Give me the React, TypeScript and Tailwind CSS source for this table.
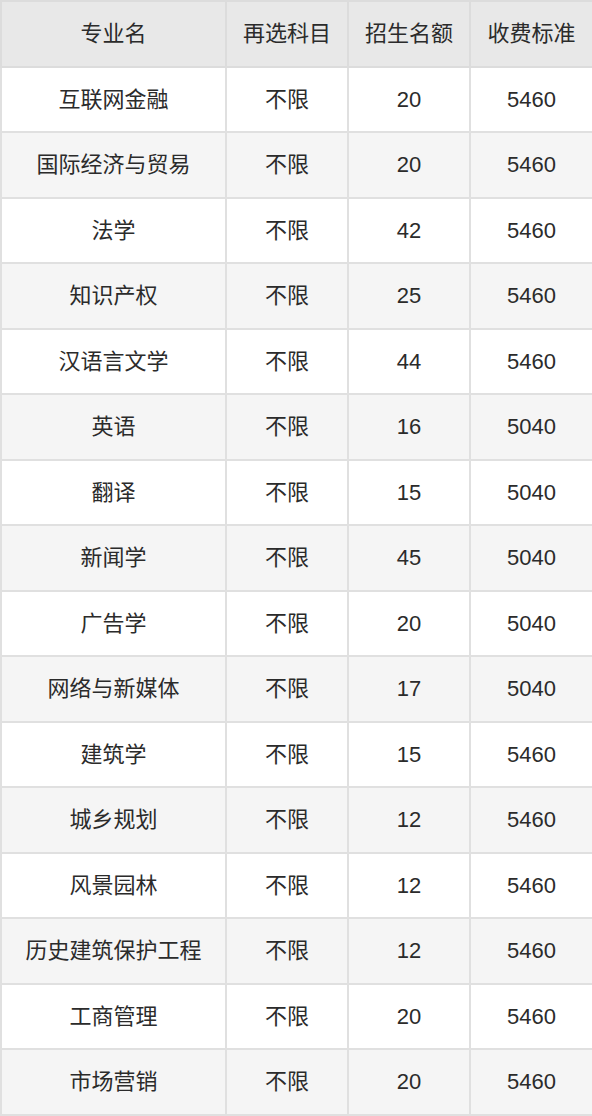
const rows: [string, string, string, string][] = [
  ["互联网金融", "不限", "20", "5460"],
  ["国际经济与贸易", "不限", "20", "5460"],
  ["法学", "不限", "42", "5460"],
  ["知识产权", "不限", "25", "5460"],
  ["汉语言文学", "不限", "44", "5460"],
  ["英语", "不限", "16", "5040"],
  ["翻译", "不限", "15", "5040"],
  ["新闻学", "不限", "45", "5040"],
  ["广告学", "不限", "20", "5040"],
  ["网络与新媒体", "不限", "17", "5040"],
  ["建筑学", "不限", "15", "5460"],
  ["城乡规划", "不限", "12", "5460"],
  ["风景园林", "不限", "12", "5460"],
  ["历史建筑保护工程", "不限", "12", "5460"],
  ["工商管理", "不限", "20", "5460"],
  ["市场营销", "不限", "20", "5460"],
];

const headers = ["专业名", "再选科目", "招生名额", "收费标准"];

export default function App() {
  return (
    <div className="w-[592px] bg-white font-['Liberation_Sans','Noto_Sans_CJK_SC',sans-serif] text-[#2b2b2b]">
      <table className="w-[592px] table-fixed border-collapse text-[22px]">
        <colgroup>
          <col className="w-[225px]" />
          <col className="w-[122px]" />
          <col className="w-[122px]" />
          <col className="w-[123px]" />
        </colgroup>
        <thead>
          <tr className="h-[65.5px] bg-[#e8e8e8]">
            {headers.map((h) => (
              <th key={h} className="border-2 border-[#dcdcdc] text-center font-normal">
                {h}
              </th>
            ))}
          </tr>
        </thead>
        <tbody>
          {rows.map((r, i) => (
            <tr key={r[0]} className={i % 2 === 0 ? "h-[65.5px] bg-white" : "h-[65.5px] bg-[#f5f5f5]"}>
              {r.map((c, j) => (
                <td key={j} className="border-2 border-[#e0e0e0] text-center">
                  {c}
                </td>
              ))}
            </tr>
          ))}
        </tbody>
      </table>
    </div>
  );
}
